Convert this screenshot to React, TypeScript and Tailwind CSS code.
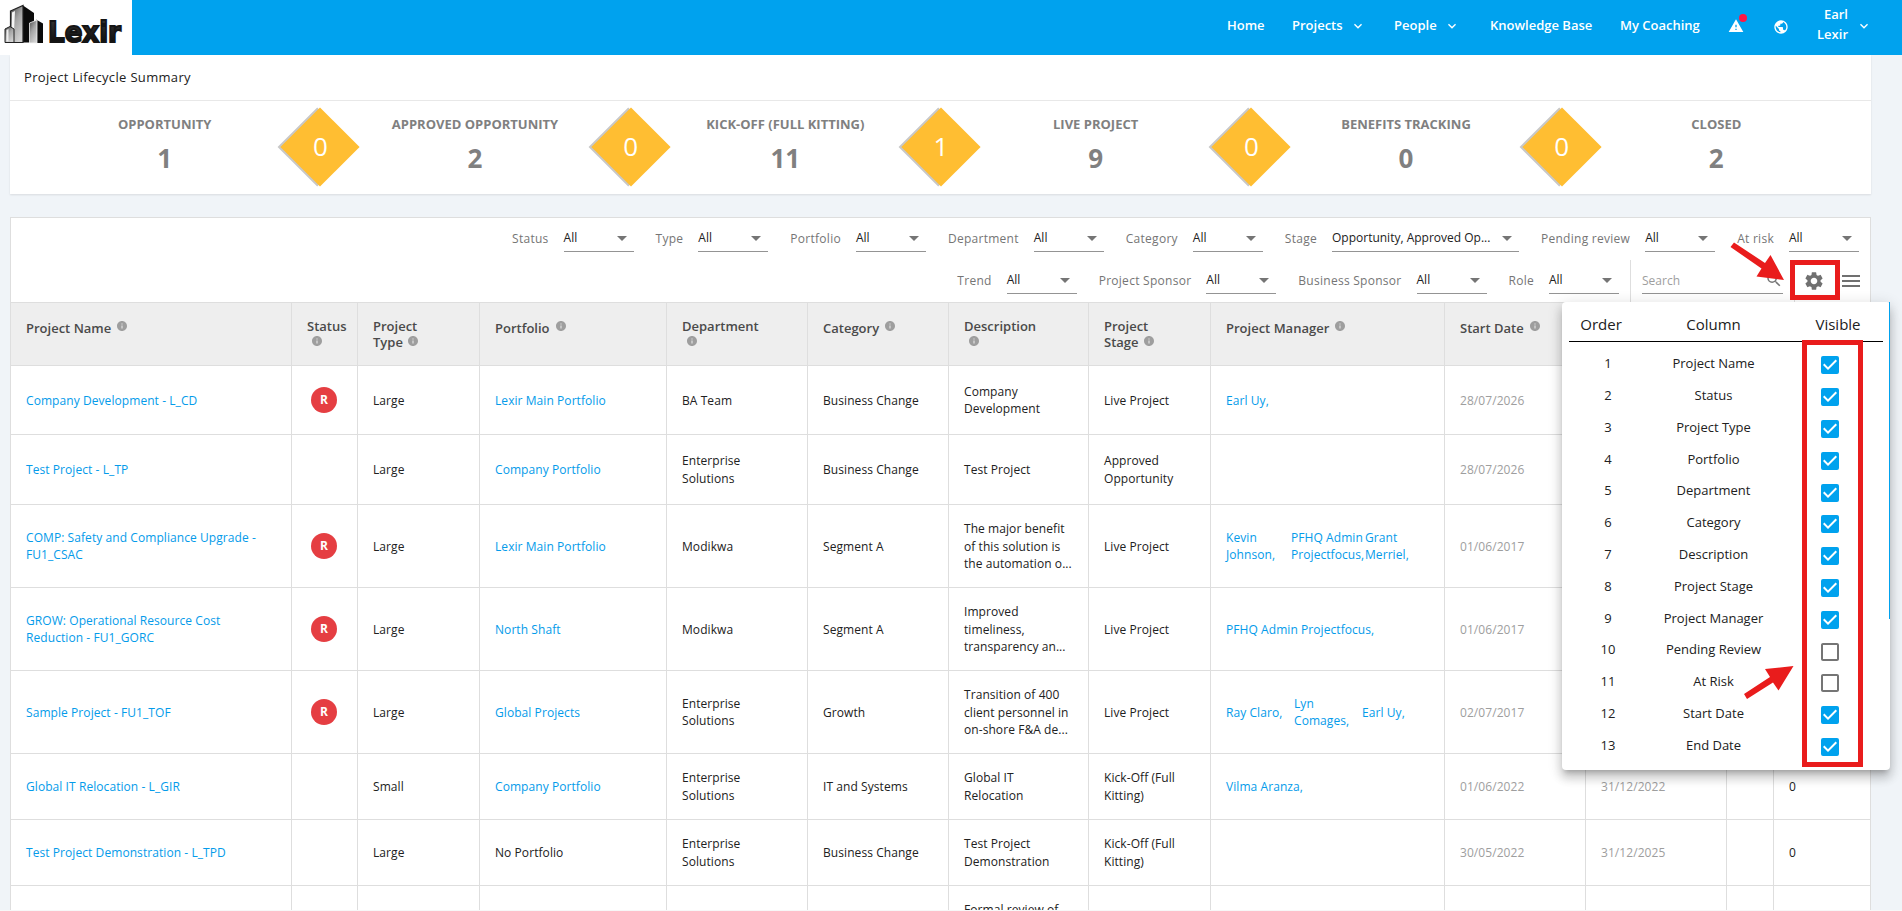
import { Fragment } from "react";
import { MdArrowDropDown, MdCheckBox, MdCheckBoxOutlineBlank, MdInfo, MdMenu, MdPublic, MdSearch, MdSettings, MdWarning, MdExpandMore } from "react-icons/md";

const stages = [
  { name: "Opportunity", count: 1, gate: 0 },
  { name: "Approved Opportunity", count: 2, gate: 0 },
  { name: "Kick-Off (Full Kitting)", count: 11, gate: 1 },
  { name: "Live Project", count: 9, gate: 0 },
  { name: "Benefits Tracking", count: 0, gate: 0 },
  { name: "Closed", count: 2, gate: null },
];

const columns = [
  { label: "Project Name", inline: true },
  { label: "Status\n" },
  { label: "Project\nType" },
  { label: "Portfolio", inline: true },
  { label: "Department\n" },
  { label: "Category", inline: true },
  { label: "Description\n" },
  { label: "Project\nStage" },
  { label: "Project Manager", inline: true },
  { label: "Start Date", inline: true },
  { label: "", inline: true },
  { label: "" },
  { label: "" },
];

type Manager = { name: string; width?: string };

type Project = {
  height: string;
  name: string;
  red?: boolean;
  type: string;
  portfolio: string;
  department: string;
  category: string;
  description: string;
  stage: string;
  managers: Manager[];
  start: string;
  end: string;
  count: string;
};

const projects: Project[] = [
  {
    height: "h-[69px]",
    name: "Company Development - L_CD",
    red: true,
    type: "Large",
    portfolio: "Lexir Main Portfolio",
    department: "BA Team",
    category: "Business Change",
    description: "Company\nDevelopment",
    stage: "Live Project",
    managers: [{ name: "Earl Uy," }],
    start: "28/07/2026",
    end: "",
    count: "",
  },
  {
    height: "h-[70px]",
    name: "Test Project - L_TP",
    type: "Large",
    portfolio: "Company Portfolio",
    department: "Enterprise\nSolutions",
    category: "Business Change",
    description: "Test Project",
    stage: "Approved\nOpportunity",
    managers: [],
    start: "28/07/2026",
    end: "",
    count: "",
  },
  {
    height: "h-[83px]",
    name: "COMP: Safety and Compliance Upgrade -\nFU1_CSAC",
    red: true,
    type: "Large",
    portfolio: "Lexir Main Portfolio",
    department: "Modikwa",
    category: "Segment A",
    description: "The major benefit\nof this solution is\nthe automation o...",
    stage: "Live Project",
    managers: [
      { name: "Kevin\nJohnson,", width: "w-[65px]" },
      { name: "PFHQ Admin\nProjectfocus,", width: "w-[74px]" },
      { name: "Grant\nMerriel," },
    ],
    start: "01/06/2017",
    end: "",
    count: "",
  },
  {
    height: "h-[83px]",
    name: "GROW: Operational Resource Cost\nReduction - FU1_GORC",
    red: true,
    type: "Large",
    portfolio: "North Shaft",
    department: "Modikwa",
    category: "Segment A",
    description: "Improved\ntimeliness,\ntransparency an...",
    stage: "Live Project",
    managers: [{ name: "PFHQ Admin Projectfocus," }],
    start: "01/06/2017",
    end: "",
    count: "",
  },
  {
    height: "h-[83px]",
    name: "Sample Project - FU1_TOF",
    red: true,
    type: "Large",
    portfolio: "Global Projects",
    department: "Enterprise\nSolutions",
    category: "Growth",
    description: "Transition of 400\nclient personnel in\non-shore F&A de...",
    stage: "Live Project",
    managers: [
      { name: "Ray Claro,", width: "w-[68px]" },
      { name: "Lyn\nComages,", width: "w-[68px]" },
      { name: "Earl Uy," },
    ],
    start: "02/07/2017",
    end: "",
    count: "",
  },
  {
    height: "h-[66px]",
    name: "Global IT Relocation - L_GIR",
    type: "Small",
    portfolio: "Company Portfolio",
    department: "Enterprise\nSolutions",
    category: "IT and Systems",
    description: "Global IT\nRelocation",
    stage: "Kick-Off (Full\nKitting)",
    managers: [{ name: "Vilma Aranza," }],
    start: "01/06/2022",
    end: "31/12/2022",
    count: "0",
  },
  {
    height: "h-[66px]",
    name: "Test Project Demonstration - L_TPD",
    type: "Large",
    portfolio: "No Portfolio",
    department: "Enterprise\nSolutions",
    category: "Business Change",
    description: "Test Project\nDemonstration",
    stage: "Kick-Off (Full\nKitting)",
    managers: [],
    start: "30/05/2022",
    end: "31/12/2025",
    count: "0",
  },
  {
    height: "h-[83px]",
    name: "",
    type: "",
    portfolio: "",
    department: "",
    category: "",
    description: "Formal review of\n\n\u00a0",
    stage: "",
    managers: [],
    start: "",
    end: "",
    count: "",
  },
];

const settings = [
  { label: "Project Name", visible: true },
  { label: "Status", visible: true },
  { label: "Project Type", visible: true },
  { label: "Portfolio", visible: true },
  { label: "Department", visible: true },
  { label: "Category", visible: true },
  { label: "Description", visible: true },
  { label: "Project Stage", visible: true },
  { label: "Project Manager", visible: true },
  { label: "Pending Review", visible: false },
  { label: "At Risk", visible: false },
  { label: "Start Date", visible: true },
  { label: "End Date", visible: true },
];

const GRID =
  "grid grid-cols-[281px_66px_122px_187px_141px_141px_140px_122px_234px_141px_141px_47px_96px]";

const Logo = () => (
  <div className="flex h-[55px] w-[132px] shrink-0 bg-white">
    <svg width="132" height="55" viewBox="0 0 132 55">
      <defs>
        <linearGradient id="tower" x1="0" y1="0" x2="0.6" y2="1">
          <stop offset="0" stopColor="#4a4a4a" />
          <stop offset="0.5" stopColor="#a5a5a5" />
          <stop offset="1" stopColor="#d0d0d0" />
        </linearGradient>
        <linearGradient id="ink" x1="0" y1="0" x2="0" y2="1">
          <stop offset="0" stopColor="#3a3a3a" />
          <stop offset="1" stopColor="#050505" />
        </linearGradient>
      </defs>
      <path d="M23 5.500 34 13V42.500H22Z" fill="#0b0b0b" />
      <path d="M10.500 11 23 5.500V42.500H10.500Z" fill="url(#tower)" stroke="#222" strokeWidth="1.200" />
      <path d="M12 12.500 15 11 13.500 42H12Z" fill="#f5f5f5" />
      <path d="M5 29 10 26.500 14 29V42.500H5Z" fill="url(#tower)" stroke="#222" strokeWidth="1" />
      <path d="M6.500 30 8.500 29V41.500H6.500Z" fill="#eee" />
      <path d="M36 19.500 43 23.500V43H35Z" fill="#0b0b0b" />
      <path d="M29.500 23 37 20V43H29.500Z" fill="url(#tower)" stroke="#f2f2f2" strokeWidth="0.800" />
      <text
        x="48"
        y="42"
        fontFamily="'DejaVu Sans'"
        fontWeight="700"
        fontSize="29"
        textLength="73"
        lengthAdjust="spacingAndGlyphs"
        fill="url(#ink)"
        stroke="#151515"
        strokeWidth="2"
      >
        Lexir
      </text>
    </svg>
  </div>
);

const Select = ({ label, value = "All", wide = false }: { label: string; value?: string; wide?: boolean }) => (
  <div className="flex h-7 items-center">
    <span className="mr-[15px] pt-0.5 text-[12px] tracking-[0.27px] text-[#757575]">{label}</span>
    <div className={`flex h-7 items-center justify-between border-b border-[#949494] ${wide ? "w-[187px]" : "w-[70px]"}`}>
      <span className="text-[12px] text-[#212121]">{value}</span>
      <MdArrowDropDown className="h-6 w-6 text-[#757575]" />
    </div>
  </div>
);

const App = () => {
  return (
    <div className="relative h-[911px] w-[1902px] overflow-hidden border-b border-[#f7f7f7] bg-[#f0f4f8] font-['Open_Sans',sans-serif] text-[#212121]">
      {/* Top bar */}
      <header className="flex h-[55px] justify-between bg-[#00a2ee]">
        <Logo />
        <nav className="flex items-center pr-[30px] pb-1 text-[13px] font-semibold text-white">
          <span className="w-[65px]">Home</span>
          <span className="flex w-[102px] items-center gap-[7px]">
            Projects <MdExpandMore className="h-4 w-4" />
          </span>
          <span className="flex w-[96px] items-center gap-[7px]">
            People <MdExpandMore className="h-4 w-4" />
          </span>
          <span className="w-[130px]">Knowledge Base</span>
          <span className="w-[108px]">My Coaching</span>
          <span className="relative w-[45px]">
            <MdWarning className="h-4 w-4" />
            <span className="absolute -top-[4px] left-[11px] h-2 w-2 rounded-full bg-[#ff1744]" />
          </span>
          <MdPublic className="mt-[2px] h-4 w-4" />
          <span className="mb-1 ml-[27px] w-[32px] text-right leading-5">Earl Lexir</span>
          <MdExpandMore className="ml-2 h-4 w-4" />
        </nav>
      </header>

      {/* Lifecycle summary */}
      <section className="ml-[10px] h-[139px] w-[1861px] bg-white shadow-[0_1px_2px_rgba(0,0,0,0.1)]">
        <h2 className="flex h-[46px] items-center border-b border-[#e8e8e8] pl-[14px] text-[13px] font-medium tracking-[0.33px]">
          Project Lifecycle Summary
        </h2>
        <div className="flex h-[93px]">
          {stages.map((stage) => (
            <Fragment key={stage.name}>
              <div className="flex flex-1 flex-col items-center pt-[13px] font-bold text-[#808080]">
                <span className="text-[13px] leading-5 uppercase">{stage.name}</span>
                <span className="mt-[6px] text-[26px] leading-9">{stage.count}</span>
              </div>
              {stage.gate !== null && (
                <div className="flex w-0 items-center justify-center pb-[2px] pl-px">
                  <div className="grid shrink-0 place-items-center">
                    <div className="col-start-1 row-start-1 h-14 w-14 rotate-45 bg-[#ffbe32] shadow-[-2px_2px_0_#c8c8c8]" />
                    <span className="z-10 col-start-1 row-start-1 text-[26px] font-medium text-white">{stage.gate}</span>
                  </div>
                </div>
              )}
            </Fragment>
          ))}
        </div>
      </section>

      {/* Projects table */}
      <section className="mt-[23px] ml-[10px] w-[1861px] border border-[#dedede] bg-white">
        <div className="flex h-[42px] items-start justify-end gap-[22px] pt-[6px] pr-[11px]">
          <Select label="Status" />
          <Select label="Type" />
          <Select label="Portfolio" />
          <Select label="Department" />
          <Select label="Category" />
          <Select label="Stage" value="Opportunity, Approved Op..." wide />
          <Select label="Pending review" />
          <Select label="At risk" />
        </div>
        <div className="flex h-[42px] items-stretch justify-end">
          <div className="flex gap-[22px] pt-[6px] pr-[11px]">
            <Select label="Trend" />
            <Select label="Project Sponsor" />
            <Select label="Business Sponsor" />
            <Select label="Role" />
          </div>
          <div className="w-[164px] border-l border-[#dedede] pt-[6px] pl-[11px]">
            <div className="flex h-7 w-[141px] items-center justify-between border-b border-[#949494] text-[12px] text-[#9e9e9e]">
              <span className="pt-0.5">Search</span>
              <MdSearch className="h-[18px] w-[18px] text-[#757575]" />
            </div>
          </div>
          <div className="flex w-[76px] items-center border-l border-[#dedede] pl-[8px] text-[#707070]">
            <MdSettings className="h-[22px] w-[22px]" />
            <MdMenu className="ml-[14px] h-6 w-6" />
          </div>
        </div>

        <div className={`${GRID} h-[64px] border-y border-[#dedede] bg-[#eeeeee]`}>
          {columns.map((col, i) => (
            <div
              key={i}
              className={`border-r border-[#dedede] pl-[15px] text-[13px] leading-4 font-semibold whitespace-pre-line text-[#4a4a4a] last:border-r-0 ${col.inline ? "pt-[17px]" : "pt-[15px]"}`}
            >
              {col.label}
              {col.label && (
                <MdInfo className={`inline h-3 w-3 text-[#9e9e9e] ${col.inline ? "-mt-2 ml-[5px]" : "-mt-1.5 ml-1"}`} />
              )}
            </div>
          ))}
        </div>

        <div className="text-[12px] leading-[17.5px] tracking-[0.07px] [&>div>div]:flex [&>div>div]:items-center [&>div>div]:border-r [&>div>div]:border-[#dedede] [&>div>div]:pt-[0.5px] [&>div>div]:pl-[15px] [&>div>div]:whitespace-pre [&>div>div:last-child]:border-r-0">
          {projects.map((project, i) => (
            <div key={i} className={`${GRID} ${project.height} border-b border-[#dedede]`}>
              <div className="text-[#049bea]">{project.name}</div>
              <div>
                {project.red && (
                  <span className="mb-px ml-[4px] flex h-[26px] w-[26px] items-center justify-center rounded-full bg-[#e53e42] text-[12px] font-bold text-white">
                    R
                  </span>
                )}
              </div>
              <div>{project.type}</div>
              <div className={project.portfolio === "No Portfolio" ? "" : "text-[#049bea]"}>{project.portfolio}</div>
              <div>{project.department}</div>
              <div>{project.category}</div>
              <div>{project.description}</div>
              <div>{project.stage}</div>
              <div className="text-[#049bea]">
                {project.managers.map((manager) => (
                  <span key={manager.name} className={manager.width}>
                    {manager.name}
                  </span>
                ))}
              </div>
              <div className="text-[#9e9e9e]">{project.start}</div>
              <div className="text-[#9e9e9e]">{project.end}</div>
              <div />
              <div>{project.count}</div>
            </div>
          ))}
        </div>
      </section>

      {/* Column settings menu */}
      <div className="absolute top-[302px] left-[1562px] h-[468px] w-[328px] rounded-[4px] bg-white px-[7px] pt-[7px] shadow-[0_5px_5px_-3px_rgba(0,0,0,0.2),0_8px_10px_1px_rgba(0,0,0,0.14),0_3px_14px_2px_rgba(0,0,0,0.12)]">
        <div className="flex h-[33px] w-[314px] items-center border-b border-black pb-[2px] text-center text-[15px]">
          <span className="w-[64px]">Order</span>
          <span className="w-[161px]">Column</span>
          <span className="w-[88px]">Visible</span>
        </div>
        <div className="pt-[6px]">
          {settings.map((item, i) => (
            <div key={item.label} className="flex h-[31.8px] items-center text-center text-[13px]">
              <span className="w-[78px]">{i + 1}</span>
              <span className="w-[133px]">{item.label}</span>
              <span className="flex w-[100px] justify-center pt-[3px]">
                {item.visible ? (
                  <MdCheckBox className="h-6 w-6 text-[#00a2ee]" />
                ) : (
                  <MdCheckBoxOutlineBlank className="h-6 w-6 text-[#757575]" />
                )}
              </span>
            </div>
          ))}
        </div>
        <div className="absolute top-0 right-0 h-[317px] w-px bg-[#00a2ee]" />
      </div>

      {/* Callouts */}
      <div className="absolute top-[260px] left-[1790px] h-[40px] w-[50px] border-[5px] border-[#e91c1c]" />
      <div className="absolute top-[340px] left-[1802px] h-[427px] w-[61px] border-[5px] border-[#e91c1c]" />
      <svg className="absolute top-[240px] left-[1728px]" width="60" height="44" viewBox="0 0 60 44" fill="#e91c1c">
        <path d="M2.500 7 6 2.500 37 23 42.500 15 56 40 28.500 36.500 33.500 28.500Z" />
      </svg>
      <svg className="absolute top-[662px] left-[1742px]" width="54" height="40" viewBox="0 0 54 40" fill="#e91c1c">
        <path d="M2 32 5 37 31 20.500 36.500 28.500 51.500 4 23 7 28 15Z" />
      </svg>
    </div>
  );
};

export default App;
